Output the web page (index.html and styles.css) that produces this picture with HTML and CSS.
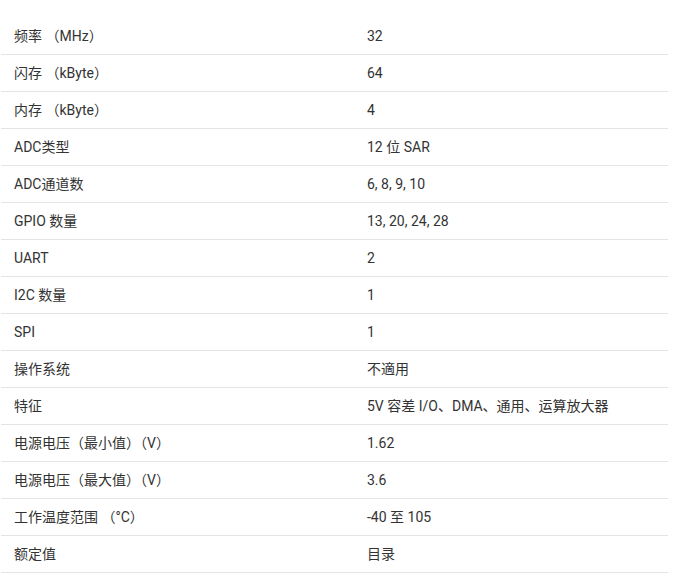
FILE: index.html
```html
<!DOCTYPE html>
<html lang="zh-CN">
<head>
<meta charset="utf-8">
<link rel="stylesheet" href="styles.css">
</head>
<body>
<table class="spec">
<tbody>
<tr><td class="k">频率 （MHz）</td><td class="v">32</td></tr>
<tr><td class="k">闪存 （kByte）</td><td class="v">64</td></tr>
<tr><td class="k">内存 （kByte）</td><td class="v">4</td></tr>
<tr><td class="k">ADC类型</td><td class="v">12 位 SAR</td></tr>
<tr><td class="k">ADC通道数</td><td class="v">6, 8, 9, 10</td></tr>
<tr><td class="k">GPIO 数量</td><td class="v">13, 20, 24, 28</td></tr>
<tr><td class="k">UART</td><td class="v">2</td></tr>
<tr><td class="k">I2C 数量</td><td class="v">1</td></tr>
<tr><td class="k">SPI</td><td class="v">1</td></tr>
<tr><td class="k">操作系统</td><td class="v">不適用</td></tr>
<tr><td class="k">特征</td><td class="v">5V 容差 I/O、DMA、通用、运算放大器</td></tr>
<tr><td class="k">电源电压（最小值）（V）</td><td class="v">1.62</td></tr>
<tr><td class="k">电源电压（最大值）（V）</td><td class="v">3.6</td></tr>
<tr><td class="k">工作温度范围 （°C）</td><td class="v">-40 至 105</td></tr>
<tr><td class="k">额定值</td><td class="v">目录</td></tr>
</tbody>
</table>
</body>
</html>
```
FILE: styles.css
```css
html, body {
  margin: 0;
  padding: 0;
  background: #fff;
}
body {
  padding: 17px 0 0 1px;
  font-family: Roboto, "Noto Sans CJK SC", sans-serif;
  font-size: 14px;
  color: #333;
}
.spec {
  width: 667px;
  border-collapse: collapse;
  table-layout: fixed;
}
.spec tr {
  height: 37px;
  border-bottom: 1px solid #e4e4e4;
}
.spec td {
  padding: 1px 0 0 13px;
  vertical-align: middle;
  line-height: 16px;
  white-space: nowrap;
}
.spec .k {
  width: 340px;
}
```
